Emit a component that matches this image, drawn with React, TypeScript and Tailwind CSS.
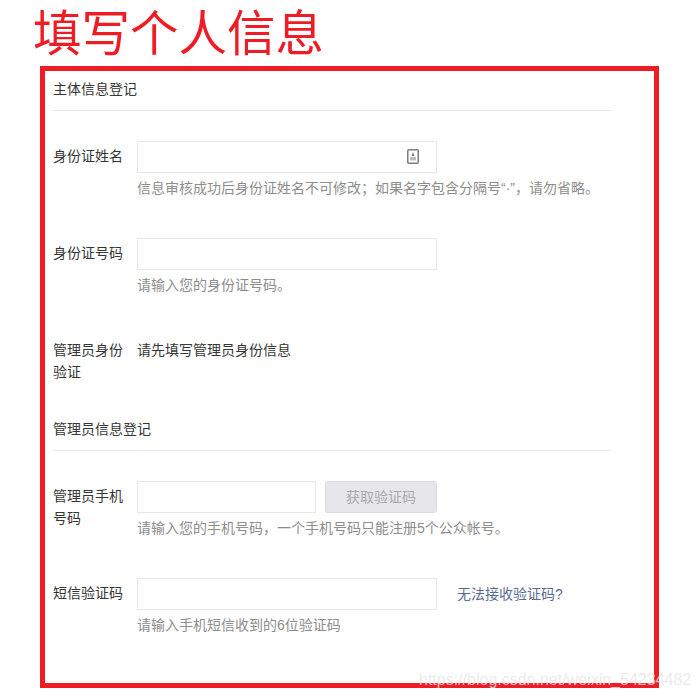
import React from 'react';

const font = '[font-family:"Liberation_Sans","Noto_Sans_CJK_SC",sans-serif]';

const SectionTitle = ({ children }: { children: React.ReactNode }) => (
  <div className="h-[33px] border-b border-[#e7e7eb] text-sm leading-[22px] text-[#353535]">{children}</div>
);

const Label = ({ children, top = 'pt-[4px]' }: { children: React.ReactNode; top?: string }) => (
  <div className={`w-[84px] shrink-0 pr-[14px] ${top}`}>
    <label className="block text-sm leading-[22px] text-[#353535]">{children}</label>
  </div>
);

const Hint = ({ children }: { children: React.ReactNode }) => (
  <p className="mt-[4px] text-sm leading-[22px] text-[#8d8d8d]">{children}</p>
);

const Input = ({ className = 'w-[300px]', children }: { className?: string; children?: React.ReactNode }) => (
  <div className={`relative h-8 border border-[#e7e7eb] bg-white ${className}`}>{children}</div>
);

const IdIcon = () => (
  <svg width="12" height="15" viewBox="0 0 12 15" className="absolute right-[17px] top-[7px]">
    <rect x="0.75" y="0.75" width="10.5" height="13.5" rx="1" fill="#fff" stroke="#7d7d7d" strokeWidth="1.5" />
    <path d="M6 3 L7.5 7 L4.5 7 Z" fill="#7d7d7d" />
    <rect x="3" y="8" width="6" height="3.5" fill="#bdbdbd" />
  </svg>
);

export default function App() {
  return (
    <div className={`relative h-[700px] w-[700px] overflow-hidden bg-white ${font}`}>
      <h1 className="ml-[33px] h-[66px] pt-[8px] text-[48.5px] font-normal leading-[52px] text-[#ee1c25]">填写个人信息</h1>

      <div className="ml-[40px] h-[622px] w-[619px] border-[5px] border-[#ee1c25] pl-2 pt-[7px]">
        <div className="w-[558px]">
          <SectionTitle>主体信息登记</SectionTitle>

          <div className="mt-[30px] flex">
            <Label>身份证姓名</Label>
            <div>
              <Input><IdIcon /></Input>
              <Hint>信息审核成功后身份证姓名不可修改；如果名字包含分隔号“·”，请勿省略。</Hint>
            </div>
          </div>

          <div className="mt-[39px] flex">
            <Label>身份证号码</Label>
            <div>
              <Input />
              <Hint>请输入您的身份证号码。</Hint>
            </div>
          </div>

          <div className="mt-[43px] flex">
            <Label top="pt-0">管理员身份验证</Label>
            <div className="text-sm leading-[22px] text-[#353535]">请先填写管理员身份信息</div>
          </div>

          <div className="mt-[35px]">
            <SectionTitle>管理员信息登记</SectionTitle>
          </div>

          <div className="mt-[30px] flex">
            <Label>管理员手机号码</Label>
            <div>
              <div className="flex gap-[9px]">
                <Input className="w-[179px]" />
                <button className="h-8 w-[112px] rounded-[3px] border border-[#dadbde] bg-[#e7e7eb] text-sm text-[#a9a9ad]">获取验证码</button>
              </div>
              <Hint>请输入您的手机号码，一个手机号码只能注册5个公众帐号。</Hint>
            </div>
          </div>

          <div className="mt-[39px] flex">
            <Label>短信验证码</Label>
            <div>
              <div className="flex items-center">
                <Input />
                <a className="ml-5 text-sm text-[#576b95]">无法接收验证码?</a>
              </div>
              <Hint>请输入手机短信收到的6位验证码</Hint>
            </div>
          </div>
        </div>
      </div>

      <span className="absolute left-[419px] top-[669px] whitespace-nowrap text-[16px] leading-[22px] text-[#e6e6e6]/80">https://blog.csdn.net/weixin_54234482</span>
    </div>
  );
}
